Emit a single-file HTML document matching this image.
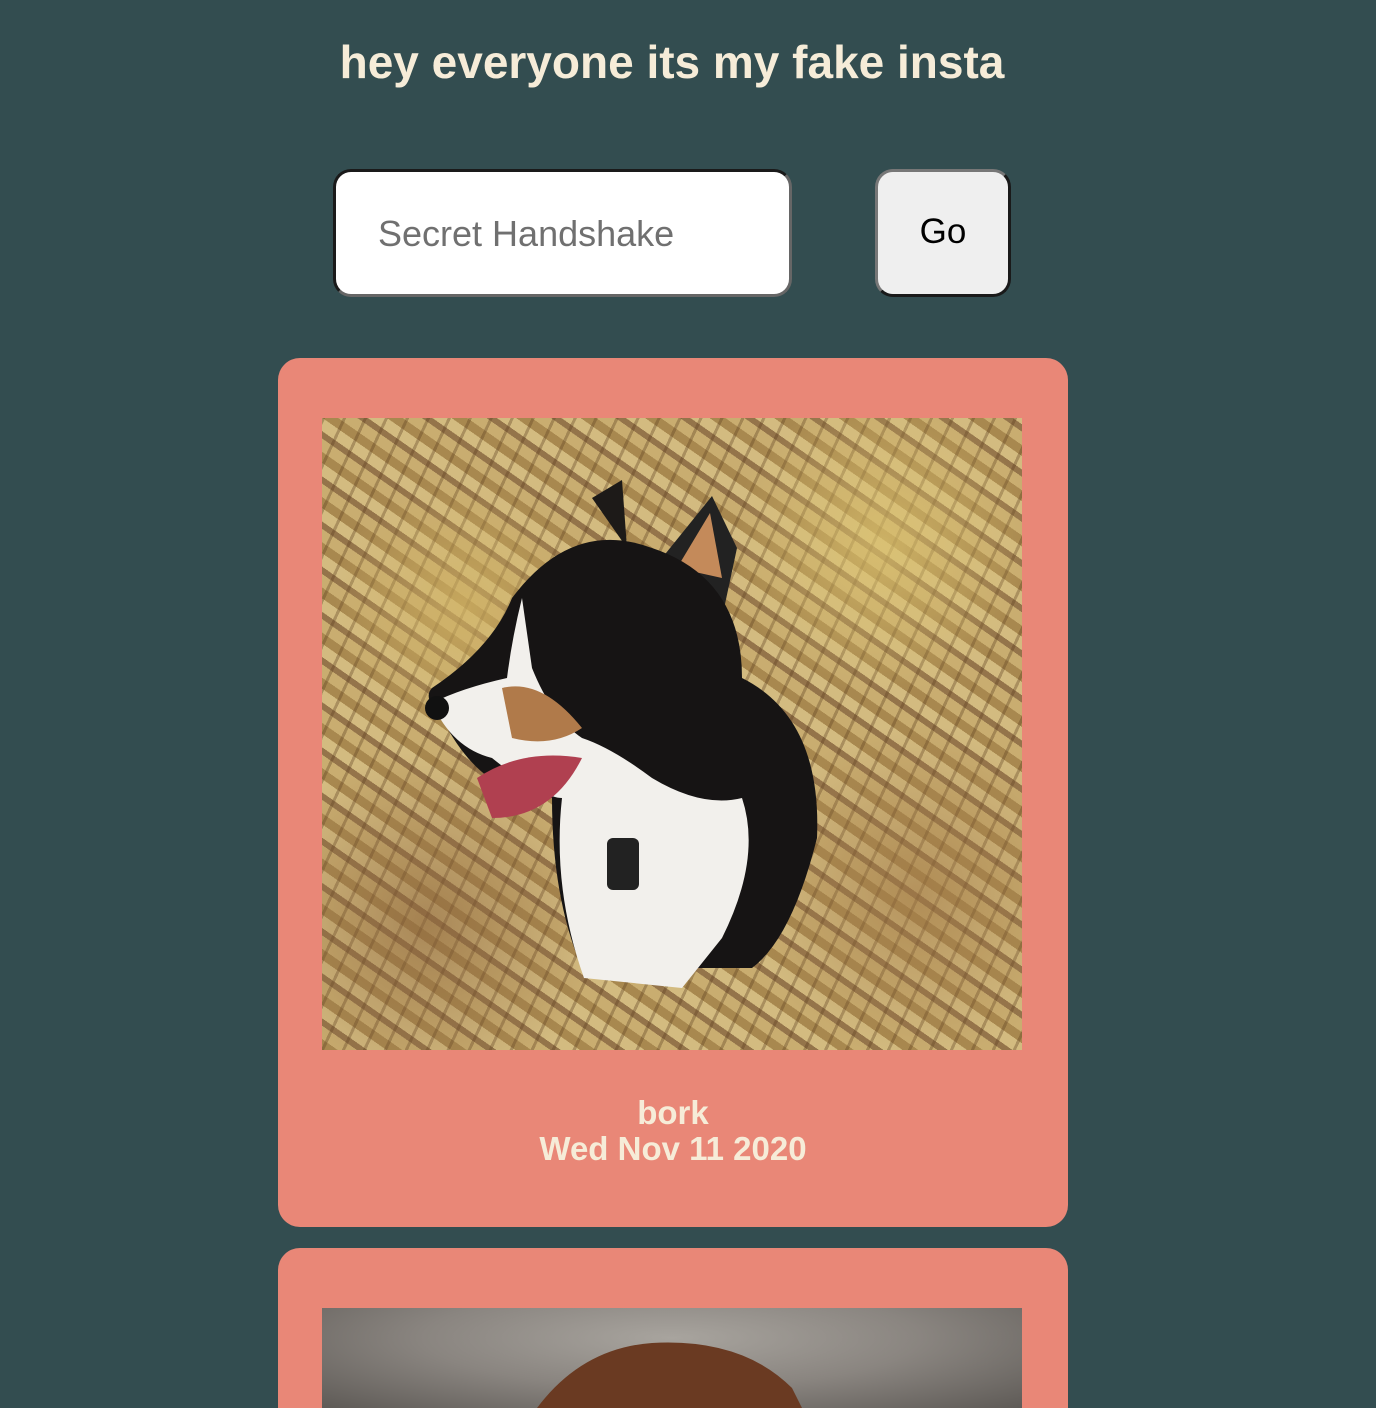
<!DOCTYPE html>
<html><head><meta charset="utf-8"><style>
html,body{margin:0;padding:0;width:1376px;height:1408px;overflow:hidden;background:#334d50;font-family:"Liberation Sans",sans-serif;}
.abs{position:absolute;}
h1{position:absolute;left:0;width:1344px;top:35px;margin:0;text-align:center;color:#f6ecd8;font-size:46px;font-weight:bold;}
.input{left:333px;top:169px;background:#fff;border-radius:18px;border:3px solid;border-color:#1a1a1a #666 #666 #1a1a1a;box-sizing:border-box;width:459px;height:128px;}
.input span{position:absolute;left:42px;top:41px;font-size:36px;color:#707070;}
.btn{left:875px;top:169px;width:136px;height:128px;box-sizing:border-box;background:#efefef;border-radius:18px;border:3px solid;border-color:#777 #1a1a1a #1a1a1a #777;text-align:center;line-height:120px;font-size:35px;color:#000;}
.card{left:278px;width:790px;background:#e98777;border-radius:22px;}
.cap{position:absolute;left:0;width:790px;text-align:center;color:#f6ecd8;font-weight:bold;font-size:33px;line-height:36px;}
</style></head><body>
<h1>hey everyone its my fake insta</h1>
<div class="abs input"><span>Secret Handshake</span></div>
<div class="abs btn">Go</div>
<div class="abs card" style="top:358px;height:869px;">
 <div class="abs" style="left:44px;top:60px;width:700px;height:632px;overflow:hidden;background:
  radial-gradient(circle at 20% 30%,rgba(210,180,100,.7) 0,transparent 18%),
  radial-gradient(circle at 80% 20%,rgba(220,195,110,.7) 0,transparent 20%),
  radial-gradient(circle at 85% 75%,rgba(160,120,70,.6) 0,transparent 22%),
  radial-gradient(circle at 15% 80%,rgba(140,100,60,.6) 0,transparent 22%),
  repeating-linear-gradient(115deg,rgba(90,60,30,.35) 0 3px,transparent 3px 19px),
  repeating-linear-gradient(35deg,#a8884f 0 9px,#c9ad70 9px 20px,#94744a 20px 26px,#d3bb80 26px 37px);">
  <svg width="700" height="632" viewBox="0 0 700 632">
   <path d="M270 80 L300 62 L305 130 Z" fill="#1d1a18"/>
   <path d="M340 140 L390 78 L415 130 L400 200 Z" fill="#222"/>
   <path d="M355 150 L388 95 L400 160 Z" fill="#c48a5a"/>
   <path d="M190 180 Q250 100 330 130 Q420 160 420 260 Q500 300 495 420 Q470 520 430 550 L260 550 Q230 480 230 380 Q160 380 120 300 Q100 280 110 270 Q170 230 190 180 Z" fill="#161414"/>
   <path d="M200 180 Q190 220 185 260 Q140 270 110 285 Q130 330 170 340 Q220 380 240 380 Q230 470 262 560 L360 570 L400 520 Q440 440 420 380 Q380 390 330 360 Q290 330 260 320 Q230 300 210 250 Z" fill="#f2f0ec"/>
   <path d="M180 270 Q220 260 260 310 Q230 330 190 320 Z" fill="#b07a4a"/>
   <path d="M155 360 Q200 330 260 340 Q230 400 170 400 Z" fill="#b04050"/>
   <rect x="285" y="420" width="32" height="52" rx="6" fill="#222"/>
   <circle cx="115" cy="290" r="12" fill="#111"/>
  </svg>
 </div>
 <div class="cap" style="top:737px;">bork<br>Wed Nov 11 2020</div>
</div>
<div class="abs card" style="top:1248px;height:160px;border-radius:22px 22px 0 0;">
 <div class="abs" style="left:44px;top:60px;width:700px;height:100px;overflow:hidden;background:radial-gradient(ellipse at 50% 30%,#a8a49e 0,#8a8580 50%,#5e5a56 100%);">
  <svg width="700" height="100"><path d="M215 100 Q260 40 330 35 Q420 30 470 80 L480 100 Z" fill="#6a3a22"/></svg>
 </div>
</div>
</body></html>
